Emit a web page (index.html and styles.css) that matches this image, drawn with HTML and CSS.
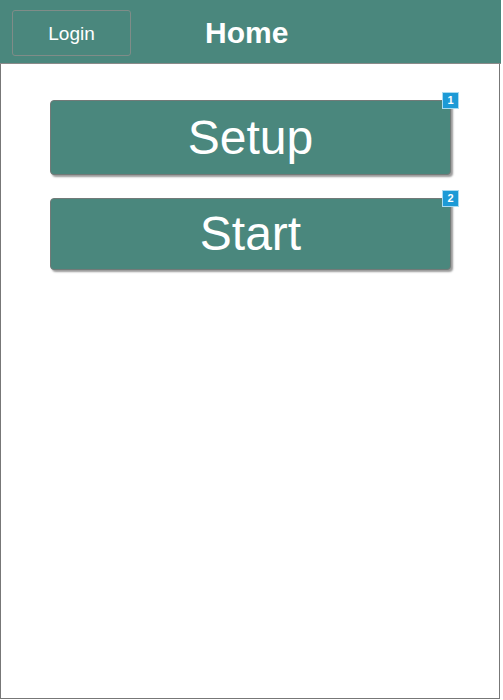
FILE: index.html
```html
<!DOCTYPE html>
<html>
<head>
<meta charset="utf-8">
<link rel="stylesheet" href="styles.css">
</head>
<body>
<div class="frame">
  <header class="topbar">
    <button class="login">Login</button>
    <h1 class="title">Home</h1>
  </header>
  <main class="content">
    <div class="bigbtn setup">Setup<span class="badge">1</span></div>
    <div class="bigbtn start">Start<span class="badge">2</span></div>
  </main>
</div>
</body>
</html>
```

FILE: styles.css
```css
html, body {
  margin: 0;
  padding: 0;
  background: #ffffff;
}
.frame {
  width: 498px;
  height: 698px;
  border-left: 1px solid #777;
  border-right: 1px solid #777;
  border-bottom: 1px solid #777;
  font-family: "Liberation Sans", Arial, sans-serif;
}
.topbar {
  height: 64px;
  margin: 0 -2px 0 -1px;
  background: #4a877d;
  border-bottom: 1px solid #8a8a8a;
  display: flex;
  align-items: center;
  box-sizing: border-box;
  padding-left: 12px;
}
.login {
  width: 119px;
  height: 46px;
  margin-top: 2px;
  padding: 2px 0 0;
  background: transparent;
  border: 1px solid #7f8c88;
  border-radius: 3px;
  color: #fff;
  font-family: "Liberation Sans", Arial, sans-serif;
  font-size: 19px;
}
.title {
  margin: 2px 0 0 74px;
  color: #fff;
  font-size: 30px;
  font-weight: bold;
}
.content {
  padding: 36px 0 0 49px;
  display: flex;
  flex-direction: column;
  gap: 23px;
}
.bigbtn {
  position: relative;
  width: 401px;
  box-sizing: border-box;
  background: #4a877d;
  border: 1px solid #727a78;
  border-radius: 4px;
  box-shadow: 2px 2px 2px #9a9a9a;
  color: #fff;
  font-size: 48px;
  text-align: center;
}
.setup {
  height: 75px;
  line-height: 73px;
}
.start {
  height: 72px;
  line-height: 70px;
}
.badge {
  position: absolute;
  top: -9px;
  right: -9px;
  width: 17px;
  height: 17px;
  box-sizing: border-box;
  background: #1d9ad6;
  border: 1px solid #a9dcf2;
  color: #fff;
  font-size: 11px;
  font-weight: bold;
  line-height: 15px;
  text-align: center;
}
```
